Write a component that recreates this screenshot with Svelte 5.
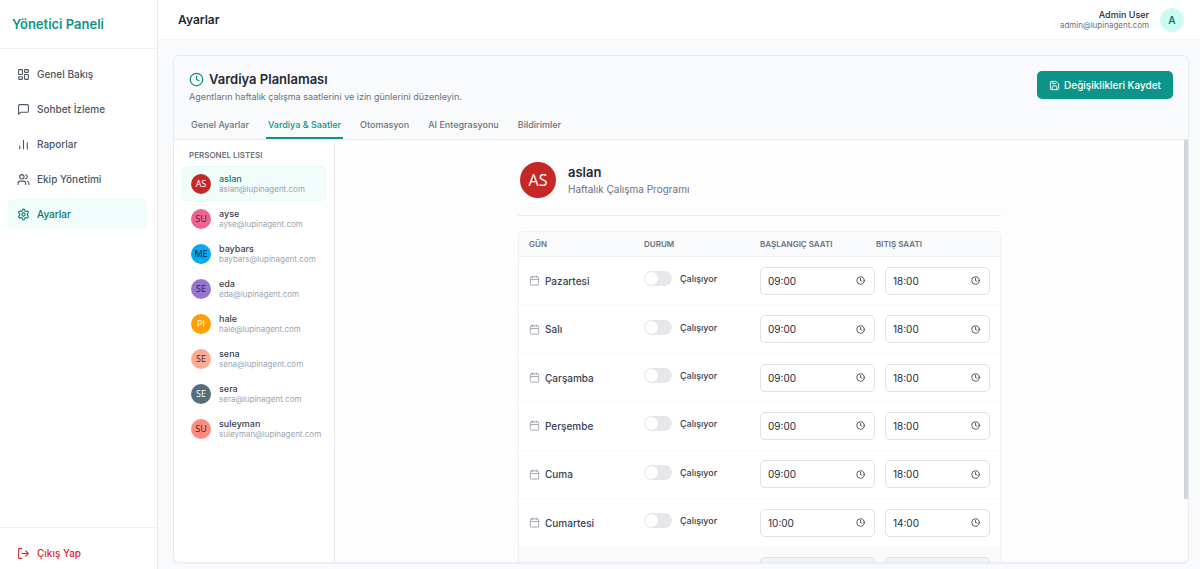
<script>
  const nav = [
    { label: 'Genel Bakış', icon: 'dashboard' },
    { label: 'Sohbet İzleme', icon: 'message' },
    { label: 'Raporlar', icon: 'chart' },
    { label: 'Ekip Yönetimi', icon: 'users' },
    { label: 'Ayarlar', icon: 'settings', active: true }
  ];
  const tabs = ['Genel Ayarlar', 'Vardiya & Saatler', 'Otomasyon', 'AI Entegrasyonu', 'Bildirimler'];
  let activeTab = $state('Vardiya & Saatler');

  const people = [
    { name: 'aslan', initials: 'AS', bg: '#c62828', fg: '#ffffff' },
    { name: 'ayse', initials: 'SU', bg: '#f06292', fg: '#3a2630' },
    { name: 'baybars', initials: 'ME', bg: '#03a9f4', fg: '#10202c' },
    { name: 'eda', initials: 'SE', bg: '#9575cd', fg: '#2a2238' },
    { name: 'hale', initials: 'PI', bg: '#ffa000', fg: '#ffffff' },
    { name: 'sena', initials: 'SE', bg: '#ffab91', fg: '#3a2822' },
    { name: 'sera', initials: 'SE', bg: '#546e7a', fg: '#ffffff' },
    { name: 'suleyman', initials: 'SU', bg: '#ff8a80', fg: '#3a2422' }
  ];
  let selected = $state(0);

  let days = $state([
    { name: 'Pazartesi', start: '09:00', end: '18:00', off: false },
    { name: 'Salı', start: '09:00', end: '18:00', off: false },
    { name: 'Çarşamba', start: '09:00', end: '18:00', off: false },
    { name: 'Perşembe', start: '09:00', end: '18:00', off: false },
    { name: 'Cuma', start: '09:00', end: '18:00', off: false },
    { name: 'Cumartesi', start: '10:00', end: '14:00', off: false },
    { name: 'Pazar', start: '09:00', end: '18:00', off: true }
  ]);
</script>

{#snippet icon(name, size)}
  <svg class="icon" width={size} height={size} viewBox="0 0 24 24" fill="none" stroke="currentColor" stroke-width="2" stroke-linecap="round" stroke-linejoin="round" aria-hidden="true">
    {#if name === 'dashboard'}
      <rect width="7" height="9" x="3" y="3" rx="1" /><rect width="7" height="5" x="14" y="3" rx="1" /><rect width="7" height="9" x="14" y="12" rx="1" /><rect width="7" height="5" x="3" y="16" rx="1" />
    {:else if name === 'message'}
      <path d="M21 15a2 2 0 0 1-2 2H7l-4 4V5a2 2 0 0 1 2-2h14a2 2 0 0 1 2 2z" />
    {:else if name === 'chart'}
      <path d="M12 20V4M19 20V9M5 20v-5" />
    {:else if name === 'users'}
      <path d="M16 21v-2a4 4 0 0 0-4-4H6a4 4 0 0 0-4 4v2" /><circle cx="9" cy="7" r="4" /><path d="M22 21v-2a4 4 0 0 0-3-3.87M16 3.13a4 4 0 0 1 0 7.75" />
    {:else if name === 'settings'}
      <path d="M12.22 2h-.44a2 2 0 0 0-2 2v.18a2 2 0 0 1-1 1.73l-.43.25a2 2 0 0 1-2 0l-.15-.08a2 2 0 0 0-2.73.73l-.22.38a2 2 0 0 0 .73 2.73l.15.1a2 2 0 0 1 1 1.72v.51a2 2 0 0 1-1 1.74l-.15.09a2 2 0 0 0-.73 2.73l.22.38a2 2 0 0 0 2.73.73l.15-.08a2 2 0 0 1 2 0l.43.25a2 2 0 0 1 1 1.73V20a2 2 0 0 0 2 2h.44a2 2 0 0 0 2-2v-.18a2 2 0 0 1 1-1.73l.43-.25a2 2 0 0 1 2 0l.15.08a2 2 0 0 0 2.73-.73l.22-.39a2 2 0 0 0-.73-2.73l-.15-.08a2 2 0 0 1-1-1.74v-.5a2 2 0 0 1 1-1.74l.15-.09a2 2 0 0 0 .73-2.73l-.22-.38a2 2 0 0 0-2.73-.73l-.15.08a2 2 0 0 1-2 0l-.43-.25a2 2 0 0 1-1-1.73V4a2 2 0 0 0-2-2z" /><circle cx="12" cy="12" r="3" />
    {:else if name === 'logout'}
      <path d="M9 21H4a1 1 0 0 1-1-1V4a1 1 0 0 1 1-1h5M16 17l5-5-5-5M21 12H9" />
    {:else if name === 'clock'}
      <circle cx="12" cy="12" r="10" /><path d="M12 6v6l4 2" />
    {:else if name === 'save'}
      <path d="M15.2 3a2 2 0 0 1 1.4.6l3.8 3.8a2 2 0 0 1 .6 1.4V19a2 2 0 0 1-2 2H5a2 2 0 0 1-2-2V5a2 2 0 0 1 2-2z" /><path d="M17 21v-7a1 1 0 0 0-1-1H8a1 1 0 0 0-1 1v7M7 3v4a1 1 0 0 0 1 1h7" />
    {:else if name === 'calendar'}
      <path d="M8 2v4M16 2v4M3 10h18" /><rect width="18" height="18" x="3" y="4" rx="2" />
    {/if}
  </svg>
{/snippet}

<div class="app">
  <aside class="sidebar">
    <div class="brand">Yönetici Paneli</div>
    <nav>
      {#each nav as item}
        <a href="#{item.icon}" class:active={item.active}>{@render icon(item.icon, 13)}{item.label}</a>
      {/each}
    </nav>
    <div class="signout">
      <button type="button">{@render icon('logout', 13)}Çıkış Yap</button>
    </div>
  </aside>

  <div class="page">
    <header class="topbar">
      <h1>Ayarlar</h1>
      <div class="account">
        <div>
          <div class="account-name">Admin User</div>
          <div class="account-mail">admin@lupinagent.com</div>
        </div>
        <span class="badge">A</span>
      </div>
    </header>

    <main>
      <section class="card">
        <div class="card-head">
          <div class="title-row">
            <div>
              <h2>{@render icon('clock', 15)}Vardiya Planlaması</h2>
              <p>Agentların haftalık çalışma saatlerini ve izin günlerini düzenleyin.</p>
            </div>
            <button type="button" class="save">{@render icon('save', 11)}Değişiklikleri Kaydet</button>
          </div>
          <div class="tabs" role="tablist">
            {#each tabs as tab}
              <button type="button" role="tab" aria-selected={tab === activeTab} class:active={tab === activeTab} onclick={() => (activeTab = tab)}>{tab}</button>
            {/each}
          </div>
        </div>

        <div class="card-body">
          <div class="staff">
            <h3>PERSONEL LISTESI</h3>
            {#each people as person, i}
              <button type="button" class="person" class:active={i === selected} onclick={() => (selected = i)}>
                <span class="avatar" style:background={person.bg} style:color={person.fg}>{person.initials}</span>
                <span class="who">
                  <span class="who-name">{person.name}</span>
                  <span class="who-mail">{person.name}@lupinagent.com</span>
                </span>
              </button>
            {/each}
          </div>

          <div class="detail">
            <div class="schedule">
              <div class="profile">
                <span class="avatar large" style:background={people[selected].bg} style:color={people[selected].fg}>{people[selected].initials}</span>
                <div>
                  <h3>{people[selected].name}</h3>
                  <p>Haftalık Çalışma Programı</p>
                </div>
              </div>
              <div class="table-box">
                <table>
                  <thead>
                    <tr><th>GÜN</th><th>DURUM</th><th>BAŞLANGIÇ SAATI</th><th>BITIŞ SAATI</th></tr>
                  </thead>
                  <tbody>
                    {#each days as day}
                      <tr class:off={day.off}>
                        <td><span class="day">{@render icon('calendar', 11)}{day.name}</span></td>
                        <td>
                          <label class="status"><input type="checkbox" role="switch" bind:checked={day.off} />{day.off ? 'İzinli' : 'Çalışıyor'}</label>
                        </td>
                        <td colspan="2">
                          <div class="times">
                            <label class="time"><input type="text" aria-label="{day.name} başlangıç saati" bind:value={day.start} disabled={day.off} />{@render icon('clock', 9)}</label>
                            <label class="time"><input type="text" aria-label="{day.name} bitiş saati" bind:value={day.end} disabled={day.off} />{@render icon('clock', 9)}</label>
                          </div>
                        </td>
                      </tr>
                    {/each}
                  </tbody>
                </table>
              </div>
            </div>
          </div>
          <div class="rail" aria-hidden="true"><div class="thumb"></div></div>
        </div>
      </section>
    </main>
  </div>
</div>

<style>
  :global(body) { margin: 0; }
  * { box-sizing: border-box; }
  .app {
    display: flex;
    height: 100vh;
    overflow: hidden;
    background: #f9fafb;
    color: #1f2937;
    font-family: Inter, 'Liberation Sans', sans-serif;
    font-size: 10px;
  }
  h1, h2, h3, p { margin: 0; }
  button, input { font: inherit; color: inherit; }
  button { border: 0; background: none; padding: 0; cursor: pointer; }
  .icon { flex: none; }

  .sidebar {
    display: flex;
    flex-direction: column;
    flex: none;
    width: 158px;
    background: #fff;
    border-right: 1px solid #e8eaed;
  }
  .brand {
    height: 49px;
    padding: 0 12px;
    border-bottom: 1px solid #f0f1f3;
    color: #0d9488;
    font-size: 13px;
    font-weight: 600;
    line-height: 48px;
  }
  nav {
    display: flex;
    flex: 1;
    flex-direction: column;
    gap: 5px;
    padding: 10px 10px 10px 8px;
  }
  nav a, .signout button {
    display: flex;
    align-items: center;
    gap: 7px;
    height: 30px;
    padding: 0 9px;
    border-radius: 5px;
    color: #4b5563;
    font-size: 10px;
    font-weight: 500;
    text-decoration: none;
  }
  nav a.active { background: #f0fdfa; color: #0f766e; }
  .signout { padding: 10px 8px 1px; border-top: 1px solid #f0f1f3; }
  .signout button { color: #dc2626; }

  .page { display: flex; flex: 1; flex-direction: column; min-width: 0; }
  .topbar {
    display: flex;
    flex: none;
    align-items: center;
    justify-content: space-between;
    height: 40px;
    padding: 0 16px 0 20px;
    background: #fff;
    border-bottom: 1px solid #f3f4f6;
  }
  h1 { font-size: 12px; font-weight: 600; }
  .account { display: flex; align-items: center; gap: 11px; text-align: right; }
  .account-name { font-size: 9px; font-weight: 500; line-height: 11px; }
  .account-mail { color: #6b7280; font-size: 8px; line-height: 11px; }
  .badge {
    width: 24px;
    border-radius: 50%;
    background: #ccfbf1;
    color: #0f766e;
    font-size: 10px;
    font-weight: 600;
    line-height: 24px;
    text-align: center;
  }

  main { flex: 1; min-height: 0; padding: 15px 11px 6px 15px; }
  .card {
    display: flex;
    flex-direction: column;
    height: 100%;
    overflow: hidden;
    background: #fff;
    border: 1px solid #e8eaed;
    border-radius: 6px;
    box-shadow: 0 1px 2px rgb(0 0 0 / 4%);
  }
  .card-head { flex: none; padding: 15px 15px 0; background: #f9fafb; border-bottom: 1px solid #e8eaed; }
  .title-row { display: flex; align-items: flex-start; justify-content: space-between; }
  h2 { display: flex; align-items: center; gap: 5px; font-size: 13px; font-weight: 600; line-height: 17px; }
  h2 :global(svg) { color: #0d9488; }
  .title-row p { color: #6b7280; font-size: 9px; line-height: 18px; }
  .save {
    display: flex;
    align-items: center;
    gap: 4px;
    height: 28px;
    padding: 0 12px;
    border-radius: 5px;
    background: #0d9488;
    color: #fff;
    font-size: 10px;
    font-weight: 500;
  }
  .tabs { display: flex; gap: 15px; margin-top: 6px; }
  .tabs button {
    height: 27px;
    padding: 0 2px;
    border-bottom: 2px solid transparent;
    color: #6b7280;
    font-size: 9px;
    font-weight: 500;
  }
  .tabs .active { border-color: #0d9488; color: #0d9488; }

  .card-body { display: flex; flex: 1; min-height: 0; }
  .staff { flex: none; width: 161px; padding: 10px 8px; border-right: 1px solid #e8eaed; }
  .staff h3 { padding: 0 7px 6px; color: #6b7280; font-size: 8px; font-weight: 600; line-height: 10px; }
  .person {
    display: flex;
    align-items: center;
    gap: 8px;
    width: 100%;
    height: 35px;
    padding: 0 8px;
    border: 1px solid transparent;
    border-radius: 5px;
    text-align: left;
  }
  .person.active { background: #f0fdfa; border-color: #e6fbf6; }
  .avatar {
    flex: none;
    width: 20px;
    border-radius: 50%;
    font-family: 'Open Sans', sans-serif;
    font-size: 9px;
    line-height: 20px;
    text-align: center;
  }
  .who { display: flex; flex-direction: column; line-height: 11px; }
  .who-name { color: #374151; font-size: 9px; font-weight: 500; }
  .who-mail { color: #9ca3af; font-size: 8px; }
  .active .who-name { color: #0f766e; }

  .detail { flex: 1; min-width: 0; overflow-y: auto; background: #fdfdfd; scrollbar-width: none; }
  .rail { flex: none; width: 4px; background: #fdfdfd; }
  .thumb { height: 85%; border-radius: 0 0 1px 1px; background: #d1d5db; }
  .schedule { max-width: 483px; margin: 0 auto; padding: 20px 0 38px; }
  .profile {
    display: flex;
    align-items: center;
    gap: 12px;
    padding: 2px 2px 17px;
    border-bottom: 1px solid #e8eaed;
  }
  .large { width: 36px; font-size: 16px; line-height: 36px; }
  .profile h3 { font-size: 13px; font-weight: 600; line-height: 17px; }
  .profile p { color: #6b7280; font-size: 10px; line-height: 16px; }
  .table-box {
    margin-top: 15px;
    overflow: hidden;
    background: #fff;
    border: 1px solid #f0f1f3;
    border-radius: 5px;
    box-shadow: 0 1px 2px rgb(0 0 0 / 4%);
  }
  table { width: 100%; height: 364px; border-collapse: separate; border-spacing: 0; table-layout: fixed; }
  th {
    height: 25px;
    padding: 0 0 0 10px;
    background: #f9fafb;
    border-bottom: 1px solid #f0f1f3;
    color: #6b7280;
    font-size: 8px;
    font-weight: 600;
    text-align: left;
    white-space: nowrap;
  }
  th:first-child { width: 115px; }
  th:nth-child(2), th:nth-child(3) { width: 116px; }
  td { padding: 0 0 0 10px; border-bottom: 1px solid #fafafb; }
  .off td { background: #fafafa; }
  .day { display: flex; align-items: center; gap: 5px; color: #374151; font-size: 10px; font-weight: 500; }
  .day :global(svg) { color: #9ca3af; }
  .status { display: flex; align-items: center; gap: 8px; padding-bottom: 4px; color: #374151; font-size: 9px; font-weight: 500; }
  .status input {
    flex: none;
    width: 28px;
    height: 15px;
    margin: 0;
    border-radius: 8px;
    background: #e5e7eb;
    appearance: none;
  }
  .status input::before {
    display: block;
    width: 13px;
    height: 13px;
    margin: 1px;
    border-radius: 50%;
    background: #fff;
    content: '';
  }
  .status input:checked { background: #f87171; }
  .status input:checked::before { margin-left: 14px; }
  .times { display: grid; grid-template-columns: 116fr 106fr; gap: 10px; padding-right: 10px; }
  .time {
    display: flex;
    align-items: center;
    height: 28px;
    min-width: 0;
    padding: 0 9px 0 7px;
    background: #fff;
    border: 1px solid #dfe1e5;
    border-radius: 5px;
  }
  .time input { flex: 1; min-width: 0; padding: 0; border: 0; outline: 0; background: none; font-size: 10px; }
  .off .time { background: #f3f4f6; color: #9ca3af; }
</style>
